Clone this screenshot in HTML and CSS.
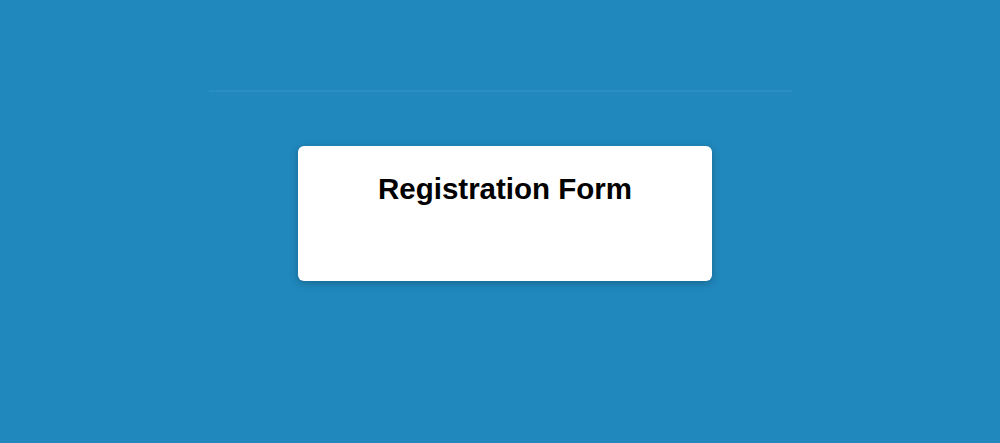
FILE: index.html
```html
<!DOCTYPE html>
<html>
<head>
<meta charset="utf-8">
<link rel="stylesheet" href="styles.css">
</head>
<body>
<div class="page">
  <div class="rule"></div>
  <div class="card">
    <h2 class="title">Registration Form</h2>
  </div>
</div>
</body>
</html>
```
FILE: styles.css
```css
html, body {
  margin: 0;
  padding: 0;
  background: #2088bd;
  height: 100%;
}
.page {
  height: 443px;
  display: flex;
  flex-direction: column;
  align-items: center;
  font-family: "Liberation Sans", Arial, sans-serif;
}
.rule {
  margin-top: 90px;
  width: 583px;
  height: 2px;
  background: rgba(255,255,255,0.05);
}
.card {
  margin-top: 54px;
  width: 414px;
  height: 135px;
  box-sizing: border-box;
  background: #fff;
  border-radius: 6px;
  box-shadow: 0 2px 8px rgba(0,0,0,0.25);
  padding-top: 26px;
  margin-left: 10px;
}
.title {
  margin: 0;
  text-align: center;
  font-size: 29.5px;
  line-height: 34px;
  font-weight: bold;
  color: #000;
}
```
